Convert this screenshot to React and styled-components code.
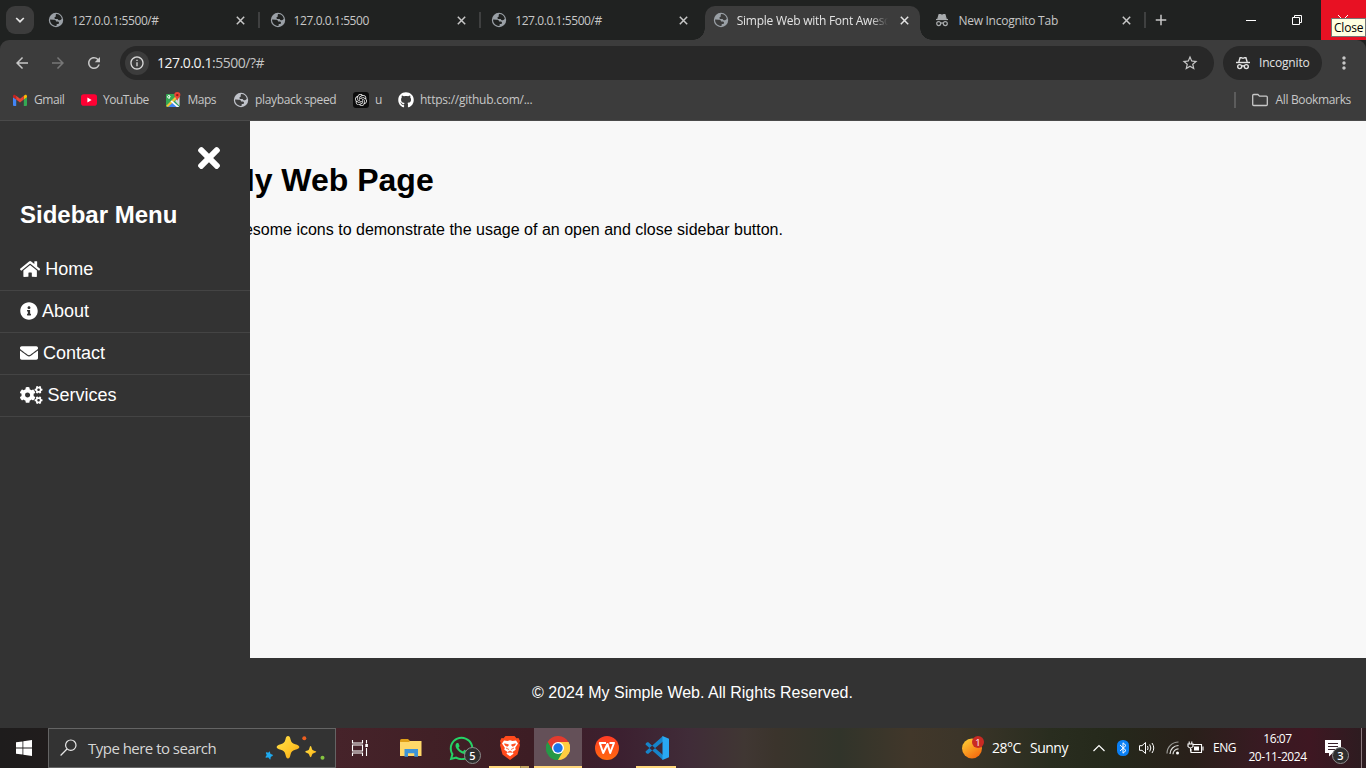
import React from "react";
import styled, { createGlobalStyle, css } from "styled-components";
import { FaHome, FaInfoCircle, FaEnvelope, FaCogs, FaTimes, FaWhatsapp, FaGithub } from "react-icons/fa";
import { MdArrowBack, MdArrowForward, MdRefresh, MdInfoOutline, MdStarBorder, MdMoreVert, MdAdd } from "react-icons/md";
import { SiOpenai } from "react-icons/si";

const ui = `"Open Sans", "Noto Sans", sans-serif`;
const page = `"Liberation Sans", Arial, sans-serif`;

const GlobalStyle = createGlobalStyle`
  *, *::before, *::after { box-sizing: border-box; }
  html, body { margin: 0; padding: 0; overflow: hidden; background: #202221; }
  svg { display: block; flex: none; }
`;

const Screen = styled.div`
  width: 1366px;
  height: 768px;
  display: flex;
  flex-direction: column;
  overflow: hidden;
  font-family: ${ui};
`;

const Label = styled.span`
  font-size: ${(p) => p.$size || 12}px;
  letter-spacing: ${(p) => p.$track || 0}px;
  color: ${(p) => p.$color || "#c7c7c7"};
  line-height: 16px;
  white-space: nowrap;
`;

/* Tab strip */
const TabStrip = styled.div`
  height: 40px;
  flex: none;
  display: flex;
  background: #202221;
`;
const TabSearch = styled.div`
  width: 28px;
  height: 28px;
  margin: 6px 3px 0 6px;
  border-radius: 9px;
  background: #3c3c3c;
  display: grid;
  place-items: center;
`;
const Tab = styled.div`
  position: relative;
  width: 221.6px;
  height: 40px;
  display: flex;
  align-items: center;
  padding-left: 11px;
  ${(p) =>
    p.$divider &&
    css`
      &::after {
        content: "";
        position: absolute;
        right: -1px;
        top: 12px;
        width: 2px;
        height: 16px;
        background: #3f4040;
      }
    `}
`;
const ActiveShape = styled.div`
  position: absolute;
  left: 3px;
  top: 6px;
  width: 215px;
  height: 34px;
  background: #3c3c3c;
  border-radius: 10px 10px 0 0;
  &::before,
  &::after {
    content: "";
    position: absolute;
    bottom: 0;
    width: 12px;
    height: 12px;
  }
  &::before {
    left: -12px;
    background: radial-gradient(circle at 0 0, transparent 11.5px, #3c3c3c 12px);
  }
  &::after {
    right: -12px;
    background: radial-gradient(circle at 100% 0, transparent 11.5px, #3c3c3c 12px);
  }
`;
const TabBody = styled.div`
  position: relative;
  display: flex;
  align-items: center;
  width: 198px;
`;
const TabTitle = styled(Label)`
  width: 151px;
  margin: 1px 12.5px 0 8px;
  overflow: hidden;
  ${(p) => p.$fade && css`
    mask-image: linear-gradient(to right, #000 134px, transparent 151px);
  `}
`;
const NewTab = styled.div`
  width: 32px;
  display: grid;
  place-items: center;
`;
const WindowButtons = styled.div`
  margin-left: auto;
  display: flex;
`;
const WindowButton = styled.div`
  width: ${(p) => (p.$danger ? 45 : 46)}px;
  height: 40px;
  display: grid;
  place-items: center;
  padding-right: ${(p) => (p.$danger ? 1 : 2)}px;
  background: ${(p) => (p.$danger ? "#e81123" : "transparent")};
  position: relative;
`;
const Tooltip = styled.div`
  position: absolute;
  left: 10px;
  top: 18px;
  width: 35px;
  height: 19px;
  padding: 0 0 0 2px;
  border: 1px solid #767676;
  background: #ffffe1;
  color: #000;
  font-size: 12px;
  line-height: 18px;
  letter-spacing: -0.2px;
`;

/* Toolbar */
const ToolbarBlock = styled.div`
  height: 81px;
  flex: none;
  background: #3c3c3c;
  border-bottom: 1px solid #4a4a4a;
  border-radius: 9px 9px 0 0;
`;
const AddressRow = styled.div`
  display: flex;
  align-items: center;
  height: 46px;
  padding-left: 13px;
`;
const NavButtons = styled.div`
  display: flex;
  gap: 18px;
  width: 107px;
  color: #c7c7c7;
`;
const Omnibox = styled.div`
  width: 1094px;
  height: 34px;
  border-radius: 17px;
  background: #282828;
  display: flex;
  align-items: center;
  padding: 0 15px 0 5px;
`;
const SiteInfo = styled.div`
  width: 24px;
  height: 24px;
  border-radius: 50%;
  background: #3c3c3c;
  color: #d8d8d8;
  display: grid;
  place-items: center;
  margin-right: 8px;
`;
const Url = styled.div`
  flex: 1;
  font-size: 14px;
  line-height: 18px;
  padding-bottom: 1px;
  letter-spacing: -0.46px;
  color: #c4c4c4;
  b { font-weight: 400; color: #f2f2f2; }
`;
const IncognitoPill = styled.div`
  width: 99px;
  height: 34px;
  margin-left: 9px;
  border-radius: 17px;
  background: #282828;
  display: flex;
  align-items: center;
  gap: 8px;
  padding-left: 12px;
`;
const MenuDots = styled.div`
  margin-left: 12px;
  color: #c7c7c7;
`;
const BookmarkRow = styled.div`
  display: flex;
  height: 28px;
  align-items: center;
  padding: 0 15px 0 12px;
`;
const Bookmark = styled.div`
  display: flex;
  align-items: center;
  gap: ${(p) => p.$gap || 6}px;
  width: ${(p) => (p.$w ? p.$w + "px" : "auto")};
`;
const AllBookmarks = styled(Bookmark)`
  margin-left: auto;
  padding-left: 16px;
  border-left: 2px solid #5c5c5c;
  height: 16px;
`;

/* Web page */
const WebPage = styled.div`
  height: 607px;
  flex: none;
  display: grid;
  grid-template-columns: 250px 1fr;
  grid-template-rows: 537px 70px;
  font-family: ${page};
  background: #333;
`;
const Sidebar = styled.aside`
  grid-row: 1 / 3;
  color: #fff;
`;
const CloseRow = styled.div`
  display: flex;
  justify-content: flex-end;
  padding: 20.5px 30px 0 0;
  height: 79px;
`;
const SidebarTitle = styled.h2`
  margin: 0 0 20px;
  padding-left: 20px;
  font-size: 24px;
  line-height: 29px;
`;
const MenuItem = styled.a`
  height: 42px;
  display: flex;
  align-items: center;
  gap: ${(p) => p.$gap || 5}px;
  padding: 0 20px 2px;
  font-size: 18px;
  border-bottom: 1px solid #444;
  span { padding-top: 2px; }
`;
const Main = styled.main`
  background: #f8f8f8;
  overflow: hidden;
  color: #000;
  padding-top: 41px;
`;
const Heading = styled.h1`
  margin: 0 0 0 -22px;
  font-size: 32px;
  line-height: 37px;
  white-space: nowrap;
`;
const Paragraph = styled.p`
  margin: 22px 0 0 -28px;
  font-size: 16px;
  line-height: 18px;
  white-space: nowrap;
`;
const Footer = styled.footer`
  color: #fff;
  font-size: 16px;
  line-height: 18px;
  padding: 26px 0 0 282px;
`;

/* Taskbar */
const Taskbar = styled.div`
  height: 40px;
  flex: none;
  display: flex;
  background: linear-gradient(90deg, #1e1c1c 0, #201c1c 48px, #46232a 336px, #412026 430px, #3d1d24 530px, #3c2030 620px, #402c38 690px, #403733 745px, #3b342c 775px, #31342a 840px, #41372a 910px, #3c3529 960px, #292d1f 1050px, #25291b 1110px, #29201a 1190px, #381a22 1260px, #3e1722 1310px, #2c1c20 1366px);
`;
const StartButton = styled.div`
  width: 48px;
  display: grid;
  place-items: center;
`;
const SearchBox = styled.div`
  width: 288px;
  height: 40px;
  border: 1px solid #646464;
  background: #333;
  display: flex;
  align-items: center;
  padding-left: 11px;
`;
const SearchText = styled(Label)`
  width: 176px;
  margin-left: 11px;
`;
const TaskButton = styled.div`
  position: relative;
  width: ${(p) => p.$w || 49}px;
  height: 40px;
  display: grid;
  place-items: center;
  background: ${(p) => (p.$active ? "#645058" : "transparent")};
  &::after {
    content: "";
    display: ${(p) => (p.$running ? "block" : "none")};
    position: absolute;
    bottom: 0;
    left: ${(p) => (p.$active ? 0 : 4)}px;
    right: ${(p) => (p.$active ? 0 : 5)}px;
    height: 2px;
    background: ${(p) => (p.$stack ? "linear-gradient(90deg,#ffd77c 31px,#98824e 31px,#98824e 32px,#c4a560 32px)" : "#ffd77c")};
  }
`;
const CountBadge = styled.div`
  position: absolute;
  left: ${(p) => p.$x}px;
  top: ${(p) => p.$y}px;
  width: 17px;
  height: 17px;
  border-radius: 50%;
  border: 1px solid #8c8c8c;
  background: #2e2e2e;
  color: #fff;
  font-size: 11px;
  font-weight: 600;
  line-height: 15px;
  text-align: center;
`;
const Tray = styled.div`
  margin-left: auto;
  display: flex;
  align-items: center;
`;
const TraySlot = styled.div`
  width: ${(p) => p.$w}px;
  display: flex;
  align-items: center;
`;
const Clock = styled.div`
  width: 63px;
  display: flex;
  flex-direction: column;
  align-items: center;
  gap: 2px;
`;
const Notifications = styled.div`
  position: relative;
  width: 52px;
  height: 40px;
  padding: 12px 0 0 16px;
`;
const ShowDesktop = styled.div`
  width: 5px;
  height: 40px;
  border-left: 1px solid #8b7a7e;
`;

const Globe = ({ size = 16, ink = "#202221", fill = "#9aa0a6" }) => (
  <svg width={size} height={size} viewBox="0 0 16 16">
    <circle cx="8" cy="8" r="7.2" fill={fill} />
    <path fill={ink} d="M8.1 2.1C10.800 2 13.300 4 13.800 6.700 13 7.700 12 8.200 10.900 8.200c-.7 0-1.100-.5-1.100-1.100H7.700c-.9 0-1.400-.7-1.200-1.500.2-.6.6-.9 1.200-.9V3.500c0-.6.1-1 .4-1.400ZM2.100 7.600l3.700.1c1.400 0 2.300.6 2.300 1.700h1.500c.9 0 1.400.6 1.400 1.300 0 .9-.5 1.400-1.400 1.400h-.9v1.700C5.300 14.400 1.800 11.500 2.100 7.600Z" />
  </svg>
);
const Cross = ({ color = "#c7c7c7" }) => (
  <svg width="9" height="9" viewBox="0 0 9 9"><path d="M.8.8l7.400 7.400M8.200.8L.8 8.200" stroke={color} strokeWidth="1.500" /></svg>
);
const IncognitoIcon = ({ color, size = 16, solid }) => (
  <svg width={size} height={size} viewBox="0 0 16 16" fill="none" stroke={color} strokeWidth={solid ? 1.200 : 1.400}>
    <path d="M3.800 7L5.100 2.700h1.200l1.700.6 1.700-.6h1.200L12.200 7" fill={solid ? color : "none"} />
    <path d={solid ? "M2 7.500h12" : "M1 7.500h14"} />
    <circle cx="4.700" cy="11.600" r="2" /><circle cx="11.300" cy="11.600" r="2" /><path d="M6.700 11.200q1.300-.8 2.600 0" />
  </svg>
);
const Gmail = () => (
  <svg width="16" height="16" viewBox="0 0 16 16">
    <path fill="#4285f4" d="M1 5l3.200 2.400V14H2a1 1 0 0 1-1-1Z" />
    <path fill="#34a853" d="M11.800 7.400L15 5v8a1 1 0 0 1-1 1h-2.200Z" />
    <path fill="#fbbc04" d="M11.800 3.800l.8-.6C13.800 2.300 15 3 15 4.300V5.200l-3.200 2.400Z" />
    <path fill="#c5221f" d="M1 5.200v-.9C1 3 2.300 2.300 3.400 3.200l.8.6v3.800Z" />
    <path fill="#ea4335" d="M4.200 3.800L8 6.700l3.800-2.900v3.800L8 10.400 4.200 7.600Z" />
  </svg>
);
const YouTube = () => (
  <svg width="16" height="16" viewBox="0 0 16 16"><rect y="2.300" width="16" height="11.400" rx="2.800" fill="#ff0033" /><path d="M6.400 5.600v4.800L10.600 8Z" fill="#fff" /></svg>
);
const Maps = () => (
  <svg width="16" height="16" viewBox="0 0 16 16">
    <rect x="0" y="2" width="13.500" height="13" rx="1" fill="#34a853" />
    <path d="M2 15l5.500-5.500L13 15Z" fill="#4285f4" /><path d="M9 9l4.500-4v9Z" fill="#d5dae0" />
    <path d="M0 14L11 3l1.800 1.800L2 15Z" fill="#f5c33b" /><path d="M5.800 8.400l7.500 6.600h-2.600L4.500 9.600Z" fill="#fff" />
    <path d="M4.700 4.700H3v1.100h.9A1.400 1.400 0 1 1 3.900 3.800" fill="none" stroke="#fff" strokeWidth=".9" />
    <path d="M11.300 0a3.100 3.100 0 0 0-3.100 3.100c0 2 2.300 3 3.100 5.600.8-2.600 3.100-3.600 3.100-5.600A3.100 3.100 0 0 0 11.300 0Z" fill="#ea4335" />
    <circle cx="11.300" cy="3.100" r="1.200" fill="#8c1a15" />
  </svg>
);
const OpenAiFrame = styled.div`
  width: 16px;
  height: 16px;
  border-radius: 3px;
  background: #0c0c0c;
  color: #f0f0f0;
  display: grid;
  place-items: center;
`;
const OpenAiIcon = () => <OpenAiFrame><SiOpenai size={12} /></OpenAiFrame>;
const Folder = () => (
  <svg width="16" height="16" viewBox="0 0 16 16"><path d="M.7 3.500q0-1 1-1h4.200l1.600 1.700h6.800q1 0 1 1v7.300q0 1-1 1H1.700q-1 0-1-1Z" fill="none" stroke="#c7c7c7" strokeWidth="1.300" /></svg>
);
const Windows = () => (
  <svg width="16" height="16" viewBox="0 0 16 16" fill="#fff"><path d="M0 2.300L6.500 1.400V7.600H0ZM7.300 1.200L16 0v7.600H7.300ZM0 8.400h6.500v6.200L0 13.700ZM7.300 8.400H16V16l-8.700-1.200Z" /></svg>
);
const Sparkles = () => (
  <svg width="64" height="30" viewBox="0 0 64 30">
    <defs><linearGradient id="gold" x1="0" y1="0" x2="1" y2="1"><stop stopColor="#ffe14a" /><stop offset=".6" stopColor="#ffc527" /><stop offset="1" stopColor="#ed9b12" /></linearGradient></defs>
    <path d="M24 3c1.400 0 2 1 2.500 3.200.7 3 1.700 4.200 4.700 5 2.800.8 4.100 1.400 4.100 2.800s-1.300 2-4.100 2.800c-3 .8-4 2-4.700 5C26 24 25.400 25.500 24 25.500s-2-1.500-2.500-3.700c-.7-3-1.700-4.200-4.700-5-2.800-.8-4.100-1.400-4.100-2.800s1.300-2 4.100-2.800c3-.8 4-2 4.700-5C22 4 22.600 3 24 3Z" fill="url(#gold)" />
    <path d="M46.600 13c1 0 1 3 2 4 1 1 3.700.8 3.700 1.700s-2.700 1-3.700 2c-1 1-1 3.500-2 3.500s-1-2.500-2-3.500-3.400-1-3.400-2 2.400-.7 3.400-1.700 1-4 2-4Z" fill="url(#gold)" />
    <path d="M5.500 18.500c.8.2.5 2 1.200 2.600s2.200.3 2.200 1.100-1.600 1-2.100 1.700.1 2.400-.7 2.500-1-1.500-1.800-1.800-2.300.5-2.700-.2.9-1.600 1-2.500-1.200-1.900-.6-2.500 2 .3 2.600 0 .2-1 .9-.9Z" fill="#1eaaf0" />
    <circle cx="40.300" cy="5.200" r="2" fill="#ee5f20" /><circle cx="58.500" cy="24.800" r="2" fill="#86c440" />
  </svg>
);
const TaskView = () => (
  <svg width="18" height="16" viewBox="0 0 18 16" fill="none" stroke="#fff" strokeWidth="1.100"><path d="M1.500 0v3h10V0M1.500 16v-3h10v3M1.500 5h10v6h-10ZM15.500 0v3.500M15.500 8v8" /><rect x="14.300" y="4" width="2.600" height="3" fill="#fff" stroke="none" /></svg>
);
const Explorer = () => (
  <svg width="22" height="20" viewBox="0 0 22 20"><path d="M0 2.500Q0 1 1.500 1H8l2 2v15H0Z" fill="#e0a018" /><path d="M0 4h9l1-1h11.500v15H0Z" fill="#ffd869" /><path d="M4.500 11h13.500v7.700h-3.700v-3.400H8v3.400H4.500Z" fill="#3c93d8" /></svg>
);
const Brave = () => (
  <svg width="22" height="26" viewBox="0 0 22 26">
    <path d="M6.500 1h9l2 2.300 2-.2L21 6l-.7 2L21 10l-2.500 9.500L11 25 3.500 19.500 1 10l.7-2L1 6l1.500-2.900 2 .2Z" fill="#ff4a1c" />
    <path d="M5 5.500l3.500.4L11 5.300l2.500.6 3.500-.4 2 3-2.800 4.200.5 2-3 2 .8 2L11 21.200l-3.500-2.500.8-2-3-2 .5-2L3 8.500Z" fill="#fff" />
    <path d="M5.500 8.800l4 1-1 1.500-2-.8ZM16.500 8.800l-4 1 1 1.500 2-.8ZM7 13l3 1.500M15 13l-3 1.500M8.500 17.500L11 16l2.500 1.500" fill="#ff4a1c" stroke="#ff4a1c" strokeWidth=".8" />
  </svg>
);
const Chrome = () => (
  <svg width="24" height="24" viewBox="0 0 24 24">
    <path d="M12 12L1.600 6A12 12 0 0 1 22.400 6Z" fill="#e33b2e" /><path d="M12 12L22.400 6A12 12 0 0 1 12 24Z" fill="#ffcd40" /><path d="M12 12V24A12 12 0 0 1 1.600 6Z" fill="#269847" />
    <path d="M12 6h10.400a12 12 0 0 1 0 12L17.200 15Z" fill="#ffcd40" /><path d="M1.600 6l5.200 9L12 12V6Z" fill="#e33b2e" /><path d="M1.600 6L6.800 15 12 18l5.200-3L12 24A12 12 0 0 1 1.600 6Z" fill="#269847" />
    <circle cx="12" cy="12" r="6" fill="#fff" /><circle cx="12" cy="12" r="4.700" fill="#1b73e8" />
  </svg>
);
const Wps = () => (
  <svg width="24" height="24" viewBox="0 0 24 24"><defs><linearGradient id="wps" x1="0" y1="0" x2="0" y2="1"><stop stopColor="#ff3b25" /><stop offset="1" stopColor="#ff6a10" /></linearGradient></defs><circle cx="12" cy="12" r="12" fill="url(#wps)" /><path d="M11 7H4.800l3.400 10L12.500 8l2.700 9L19 7h-4.500" fill="none" stroke="#fff" strokeWidth="2" strokeLinejoin="round" /></svg>
);
const VsCode = () => (
  <svg width="24" height="24" viewBox="0 0 24 24"><path d="M1 7l2-1 15 13v5L.5 8.500ZM1 17l2 1L18 5.500V0L.5 15.500Z" fill="#1684ca" /><path d="M17.500 0L24 2.800v18.400L17.500 24Z" fill="#29a8f2" /></svg>
);
const Weather = () => (
  <svg width="23" height="24" viewBox="0 0 23 24"><defs><linearGradient id="sun" x1=".1" y1="0" x2=".8" y2="1"><stop stopColor="#ffd137" /><stop offset="1" stopColor="#f4650c" /></linearGradient></defs><circle cx="10" cy="12.500" r="10" fill="url(#sun)" /><circle cx="16" cy="6" r="6" fill="#c92a23" /><text x="16" y="9.500" fill="#fff" fontSize="9.500" textAnchor="middle" fontFamily="Open Sans">1</text></svg>
);
const Bluetooth = () => (
  <svg width="12" height="16" viewBox="0 0 12 16"><rect width="12" height="16" rx="5.500" fill="#0a80f5" /><path d="M3 5l6 5.500-3 2.700V2.800l3 2.700L3 11" fill="none" stroke="#fff" /></svg>
);
const Volume = () => (
  <svg width="17" height="14" viewBox="0 0 17 14" fill="none" stroke="#fff"><path d="M.5 4.700H3L6.500 1.500v11L3 9.300H.5ZM8.500 5q1.200 2 0 4M10.700 3.500q2.300 3.500 0 7M13 2q3.500 5 0 10" /></svg>
);
const Wifi = () => (
  <svg width="14" height="14" viewBox="0 0 14 14" fill="none" stroke="#9b9b97" strokeWidth="1.200"><path d="M1 12.500A11.500 11.500 0 0 1 12.500 1" /><path d="M4 13A8.500 8.500 0 0 1 12.500 4.500M7 13.200A5.500 5.500 0 0 1 12.500 7.800" stroke="#e2e2df" /><circle cx="11.500" cy="12" r="1.500" fill="#fff" stroke="none" /></svg>
);
const Battery = () => (
  <svg width="17" height="14" viewBox="0 0 17 14" fill="none" stroke="#fff" strokeWidth="1.100"><path d="M6 3.500h8.500v8H4V8M16 5.500v4" /><rect x="7" y="5.500" width="5" height="4" fill="#fff" stroke="none" /><path d="M1 3h5v2.500q-2.500 3-5 0ZM2.200 3V.5M4.800 3V.5M3.500 6.500v4" /></svg>
);
const NoteIcon = () => (
  <svg width="17" height="17" viewBox="0 0 17 17"><path d="M0 0h16v13H7.500L4 16.500V13H0Z" fill="#fff" /><path d="M3 3.500h10M3 6.500h10M3 9.500h7" stroke="#38202a" /></svg>
);

const tabs = [
  { title: "127.0.0.1:5500/#", divider: true },
  { title: "127.0.0.1:5500", divider: true },
  { title: "127.0.0.1:5500/#" },
  { title: "Simple Web with Font Awesome", active: true },
  { title: "New Incognito Tab", divider: true, incognito: true },
];
const bookmarks = [
  { name: "Gmail", icon: <Gmail />, w: 69, track: -0.45 },
  { name: "YouTube", icon: <YouTube />, w: 84.5, track: -0.5 },
  { name: "Maps", icon: <Maps />, w: 67.5, track: -0.5 },
  { name: "playback speed", icon: <Globe ink="#3c3c3c" fill="#c0c3ca" />, w: 120, track: -0.34 },
  { name: "u", icon: <OpenAiIcon />, w: 45, track: 0 },
  { name: "https://github.com/...", icon: <FaGithub size={16} color="#fff" />, w: 150, track: -0.25 },
];
const menu = [
  { name: "Home", Icon: FaHome, w: 20.25 },
  { name: "About", Icon: FaInfoCircle, w: 18, gap: 4 },
  { name: "Contact", Icon: FaEnvelope, w: 18 },
  { name: "Services", Icon: FaCogs, w: 22.5 },
];

export default function App() {
  return (
    <Screen>
      <GlobalStyle />
      <TabStrip>
        <TabSearch>
          <svg width="10" height="6" viewBox="0 0 10 6"><path d="M1.200 1L5 4.700 8.800 1" fill="none" stroke="#e3e3e3" strokeWidth="1.700" /></svg>
        </TabSearch>
        {tabs.map((t, i) => (
          <Tab key={i} $divider={t.divider}>
            {t.active && <ActiveShape />}
            <TabBody>
              {t.incognito ? <IncognitoIcon color="#a8abad" solid /> : <Globe ink={t.active ? "#3c3c3c" : "#202221"} />}
              <TabTitle $track={t.active || t.incognito ? -0.26 : -0.42} $color={t.active ? "#e3e3e3" : "#c7c7c7"} $fade={t.active}>{t.title}</TabTitle>
              <Cross color={t.active ? "#e3e3e3" : "#c7c7c7"} />
            </TabBody>
          </Tab>
        ))}
        <NewTab><MdAdd size={18} color="#c7c7c7" /></NewTab>
        <WindowButtons>
          <WindowButton><svg width="10" height="10"><path d="M0 5.500h10" stroke="#fff" /></svg></WindowButton>
          <WindowButton><svg width="10" height="10" fill="none" stroke="#fff"><path d="M.5 2.500h7v7h-7ZM2.500 2.500v-2h7v7h-2" /></svg></WindowButton>
          <WindowButton $danger>
            <svg width="10" height="10"><path d="M0 0l10 10M10 0L0 10" stroke="#fff" /></svg>
            <Tooltip>Close</Tooltip>
          </WindowButton>
        </WindowButtons>
      </TabStrip>

      <ToolbarBlock>
        <AddressRow>
          <NavButtons>
            <MdArrowBack size={18} /><MdArrowForward size={18} color="#777" /><MdRefresh size={18} />
          </NavButtons>
          <Omnibox>
            <SiteInfo><MdInfoOutline size={16} /></SiteInfo>
            <Url><b>127.0.0.1</b>:5500/?#</Url>
            <MdStarBorder size={18} color="#c7c7c7" />
          </Omnibox>
          <IncognitoPill>
            <IncognitoIcon color="#e3e3e3" />
            <Label $color="#e3e3e3" $track={-0.17}>Incognito</Label>
          </IncognitoPill>
          <MenuDots><MdMoreVert size={20} /></MenuDots>
        </AddressRow>
        <BookmarkRow>
          {bookmarks.map((b) => (
            <Bookmark key={b.name} $w={b.w}>{b.icon}<Label $track={b.track}>{b.name}</Label></Bookmark>
          ))}
          <AllBookmarks $gap={8}><Folder /><Label $track={-0.35}>All Bookmarks</Label></AllBookmarks>
        </BookmarkRow>
      </ToolbarBlock>

      <WebPage>
        <Sidebar>
          <CloseRow><FaTimes style={{ width: 22, height: 32 }} /></CloseRow>
          <SidebarTitle>Sidebar Menu</SidebarTitle>
          {menu.map(({ name, Icon, w, gap }) => (
            <MenuItem key={name} $gap={gap}><Icon style={{ width: w, height: 18 }} /><span>{name}</span></MenuItem>
          ))}
        </Sidebar>
        <Main>
          <Heading>My Web Page</Heading>
          <Paragraph>Awesome icons to demonstrate the usage of an open and close sidebar button.</Paragraph>
        </Main>
        <Footer>© 2024 My Simple Web. All Rights Reserved.</Footer>
      </WebPage>

      <Taskbar>
        <StartButton><Windows /></StartButton>
        <SearchBox>
          <svg width="17" height="18" viewBox="0 0 17 18" fill="none" stroke="#e8e8e8" strokeWidth="1.200"><circle cx="10.800" cy="6.200" r="5.200" /><path d="M7 10L.6 16.500" /></svg>
          <SearchText $size={15} $track={-0.52} $color="#d6d6d6">Type here to search</SearchText>
          <Sparkles />
        </SearchBox>
        <TaskButton $w={48}><TaskView /></TaskButton>
        <TaskButton $w={53}><Explorer /></TaskButton>
        <TaskButton $w={48}><FaWhatsapp size={27} color="#25d366" /><CountBadge $x={27} $y={19}>5</CountBadge></TaskButton>
        <TaskButton $w={49} $running $stack><Brave /></TaskButton>
        <TaskButton $w={48} $active $running><Chrome /></TaskButton>
        <TaskButton $w={50}><Wps /></TaskButton>
        <TaskButton $w={49} $running><VsCode /></TaskButton>
        <Tray>
          <TraySlot $w={30}><Weather /></TraySlot>
          <TraySlot $w={38}><Label $size={14} $track={-0.5} $color="#fff">28°C</Label></TraySlot>
          <TraySlot $w={63}><Label $size={14} $track={-0.5} $color="#fff">Sunny</Label></TraySlot>
          <TraySlot $w={24}><svg width="12" height="8"><path d="M.5 7L6 1.500 11.500 7" fill="none" stroke="#fff" strokeWidth="1.200" /></svg></TraySlot>
          <TraySlot $w={22}><Bluetooth /></TraySlot>
          <TraySlot $w={27}><Volume /></TraySlot>
          <TraySlot $w={21}><Wifi /></TraySlot>
          <TraySlot $w={26}><Battery /></TraySlot>
          <TraySlot $w={33}><Label $track={-0.45} $color="#fff">ENG</Label></TraySlot>
          <Clock><Label $track={-0.45} $color="#fff">16:07</Label><Label $track={-0.45} $color="#fff">20-11-2024</Label></Clock>
          <Notifications><NoteIcon /><CountBadge $x={23} $y={19}>3</CountBadge></Notifications>
        </Tray>
        <ShowDesktop />
      </Taskbar>
    </Screen>
  );
}
